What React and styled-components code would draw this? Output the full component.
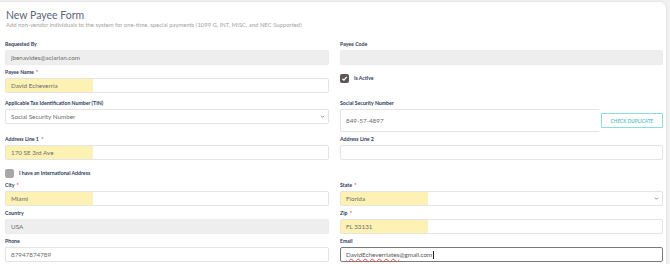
import styled, { createGlobalStyle } from 'styled-components';

const GlobalStyle = createGlobalStyle`
    body {
        margin: 0;
        background: #f1f1f1;
        font-family: Lato, "Open Sans", sans-serif;
    }
`;

const Card = styled.div`
    margin-top: 2px;
    width: 666px;
    background: #fff;
    border-radius: 0 6px 0 0;
    box-shadow: 0 0 3px rgba(0, 0, 0, 0.12);
    padding: 7px 3px 12px 5px;
    box-sizing: border-box;
`;

const Title = styled.h1`
    margin: 0 0 0 1px;
    font-size: 10.5px;
    line-height: 12px;
    font-weight: 400;
    color: #5b6479;
`;

const Subtitle = styled.p`
    margin: 0 0 0 1px;
    font-size: 5.9px;
    line-height: 7px;
    color: #a3a3a3;
`;

const Grid = styled.div`
    display: grid;
    grid-template-columns: 324px 323px;
    column-gap: 11px;
    row-gap: 4px;
    margin-top: 13px;
`;

const Field = styled.div`
    display: flex;
    flex-direction: column;
`;

const Label = styled.label`
    font-size: 5.2px;
    line-height: 6px;
    font-weight: 700;
    color: #2c3a5c;
    margin-bottom: 3px;
`;

const Req = styled.span`
    color: #e0434b;
    margin-left: 1px;
`;

const Input = styled.input`
    display: block;
    box-sizing: border-box;
    width: 100%;
    height: ${p => p.$tall ? '23px' : '15px'};
    padding: 0 0 0 5px;
    font-family: inherit;
    font-size: 6.3px;
    color: #6d6d6d;
    border: 1px solid ${p => p.$muted ? '#ececec' : '#e4e4e4'};
    border-right-color: ${p => p.$open ? 'transparent' : p.$muted ? '#ececec' : '#e4e4e4'};
    border-radius: 2px;
    box-shadow: 0 0 1px rgba(0, 0, 0, 0.06);
    background: ${p => p.$muted
        ? '#eeeeee'
        : p.$hl ? 'linear-gradient(to right, #fdf2b3 0 87px, #fff 87px)' : '#fff'};
    outline: none;
`;

const SelectWrap = styled.div`
    position: relative;
`;

const Chevron = styled.svg`
    position: absolute;
    right: 4px;
    top: 5px;
    width: 5px;
    height: 5px;
    pointer-events: none;
`;

const SsnRow = styled.div`
    display: flex;
    align-items: center;
    gap: 1px;
`;

const DupButton = styled.button`
    flex: 0 0 62px;
    height: 15px;
    padding: 0;
    border: 1px solid #8fdcdc;
    border-radius: 1px;
    background: #fff;
    color: #5fc3c8;
    font-family: inherit;
    font-size: 4.6px;
    font-weight: 700;
    letter-spacing: 0.1px;
`;

const CheckRow = styled.div`
    display: flex;
    align-items: ${p => p.$top ? 'flex-start' : 'center'};
    gap: 5px;
    padding: ${p => p.$pad || '0'};
    grid-column: ${p => p.$full ? '1 / -1' : 'auto'};
`;

const Box = styled.span`
    width: 9px;
    height: 9px;
    border-radius: 2px;
    background: ${p => p.$on ? '#5d5856' : '#a8a8a8'};
    display: flex;
    align-items: center;
    justify-content: center;
`;

const CheckText = styled.span`
    font-size: 5.2px;
    line-height: 9px;
    font-weight: 700;
    color: #2c3a5c;
`;

const Focused = styled.div`
    box-sizing: border-box;
    height: 15px;
    border: 1px solid #7a7a7a;
    border-radius: 2px;
    padding-left: 5px;
    display: flex;
    align-items: center;
    font-size: 6.3px;
    color: #555;
`;

const Squiggle = styled.span`
    text-decoration: underline wavy #e2534f;
    text-decoration-thickness: 0.5px;
    text-underline-offset: 0.5px;
`;

const Caret = styled.span`
    width: 0.6px;
    height: 8px;
    background: #222;
    margin-left: 0.5px;
`;

const Down = () => (
    <Chevron viewBox="0 0 10 10">
        <path d="M2 3.5 L5 6.5 L8 3.5" fill="none" stroke="#555" strokeWidth="1.4" />
    </Chevron>
);

const Tick = () => (
    <svg width="7" height="7" viewBox="0 0 10 10">
        <path d="M2 5.3 L4.2 7.4 L8.2 2.8" fill="none" stroke="#fff" strokeWidth="1.8" />
    </svg>
);

const TextField = ({ label, req, ...rest }) => (
    <Field>
        <Label>{label}{req && <Req>*</Req>}</Label>
        <Input readOnly {...rest} />
    </Field>
);

const SelectField = ({ label, req, ...rest }) => (
    <Field>
        <Label>{label}{req && <Req>*</Req>}</Label>
        <SelectWrap>
            <Input readOnly {...rest} />
            <Down />
        </SelectWrap>
    </Field>
);

export default function App() {
    return (
        <>
            <GlobalStyle />
            <Card>
                <Title>New Payee Form</Title>
                <Subtitle>Add non-vendor individuals to the system for one-time, special payments (1099 G, INT, MISC, and NEC Supported)</Subtitle>
                <Grid>
                    <TextField label="Requested By" value="jbenavides@aclarian.com" $muted />
                    <TextField label="Payee Code" value="" $muted />

                    <TextField label="Payee Name " req value="David Echeverria" $hl />
                    <CheckRow $top $pad="5px 0 13px 0">
                        <Box $on><Tick /></Box>
                        <CheckText>Is Active</CheckText>
                    </CheckRow>

                    <SelectField label="Applicable Tax Identification Number (TIN)" value="Social Security Number" />
                    <Field>
                        <Label>Social Security Number</Label>
                        <SsnRow>
                            <Input readOnly value="849-57-4897" $tall $open />
                            <DupButton>CHECK DUPLICATE</DupButton>
                        </SsnRow>
                    </Field>

                    <TextField label="Address Line 1 " req value="170 SE 3rd Ave" $hl />
                    <TextField label="Address Line 2" value="" />

                    <CheckRow $full $pad="5px 0 0 0">
                        <Box />
                        <CheckText>I have an International Address</CheckText>
                    </CheckRow>

                    <TextField label="City " req value="Miami" $hl />
                    <SelectField label="State " req value="Florida" $hl />

                    <TextField label="Country" value="USA" $muted />
                    <TextField label="Zip " req value="FL 33131" $hl />

                    <TextField label="Phone" value="87947874789" />
                    <Field>
                        <Label>Email</Label>
                        <Focused>
                            <Squiggle>DavidEcheverriates</Squiggle>@gmail.com<Caret />
                        </Focused>
                    </Field>
                </Grid>
            </Card>
        </>
    );
}
